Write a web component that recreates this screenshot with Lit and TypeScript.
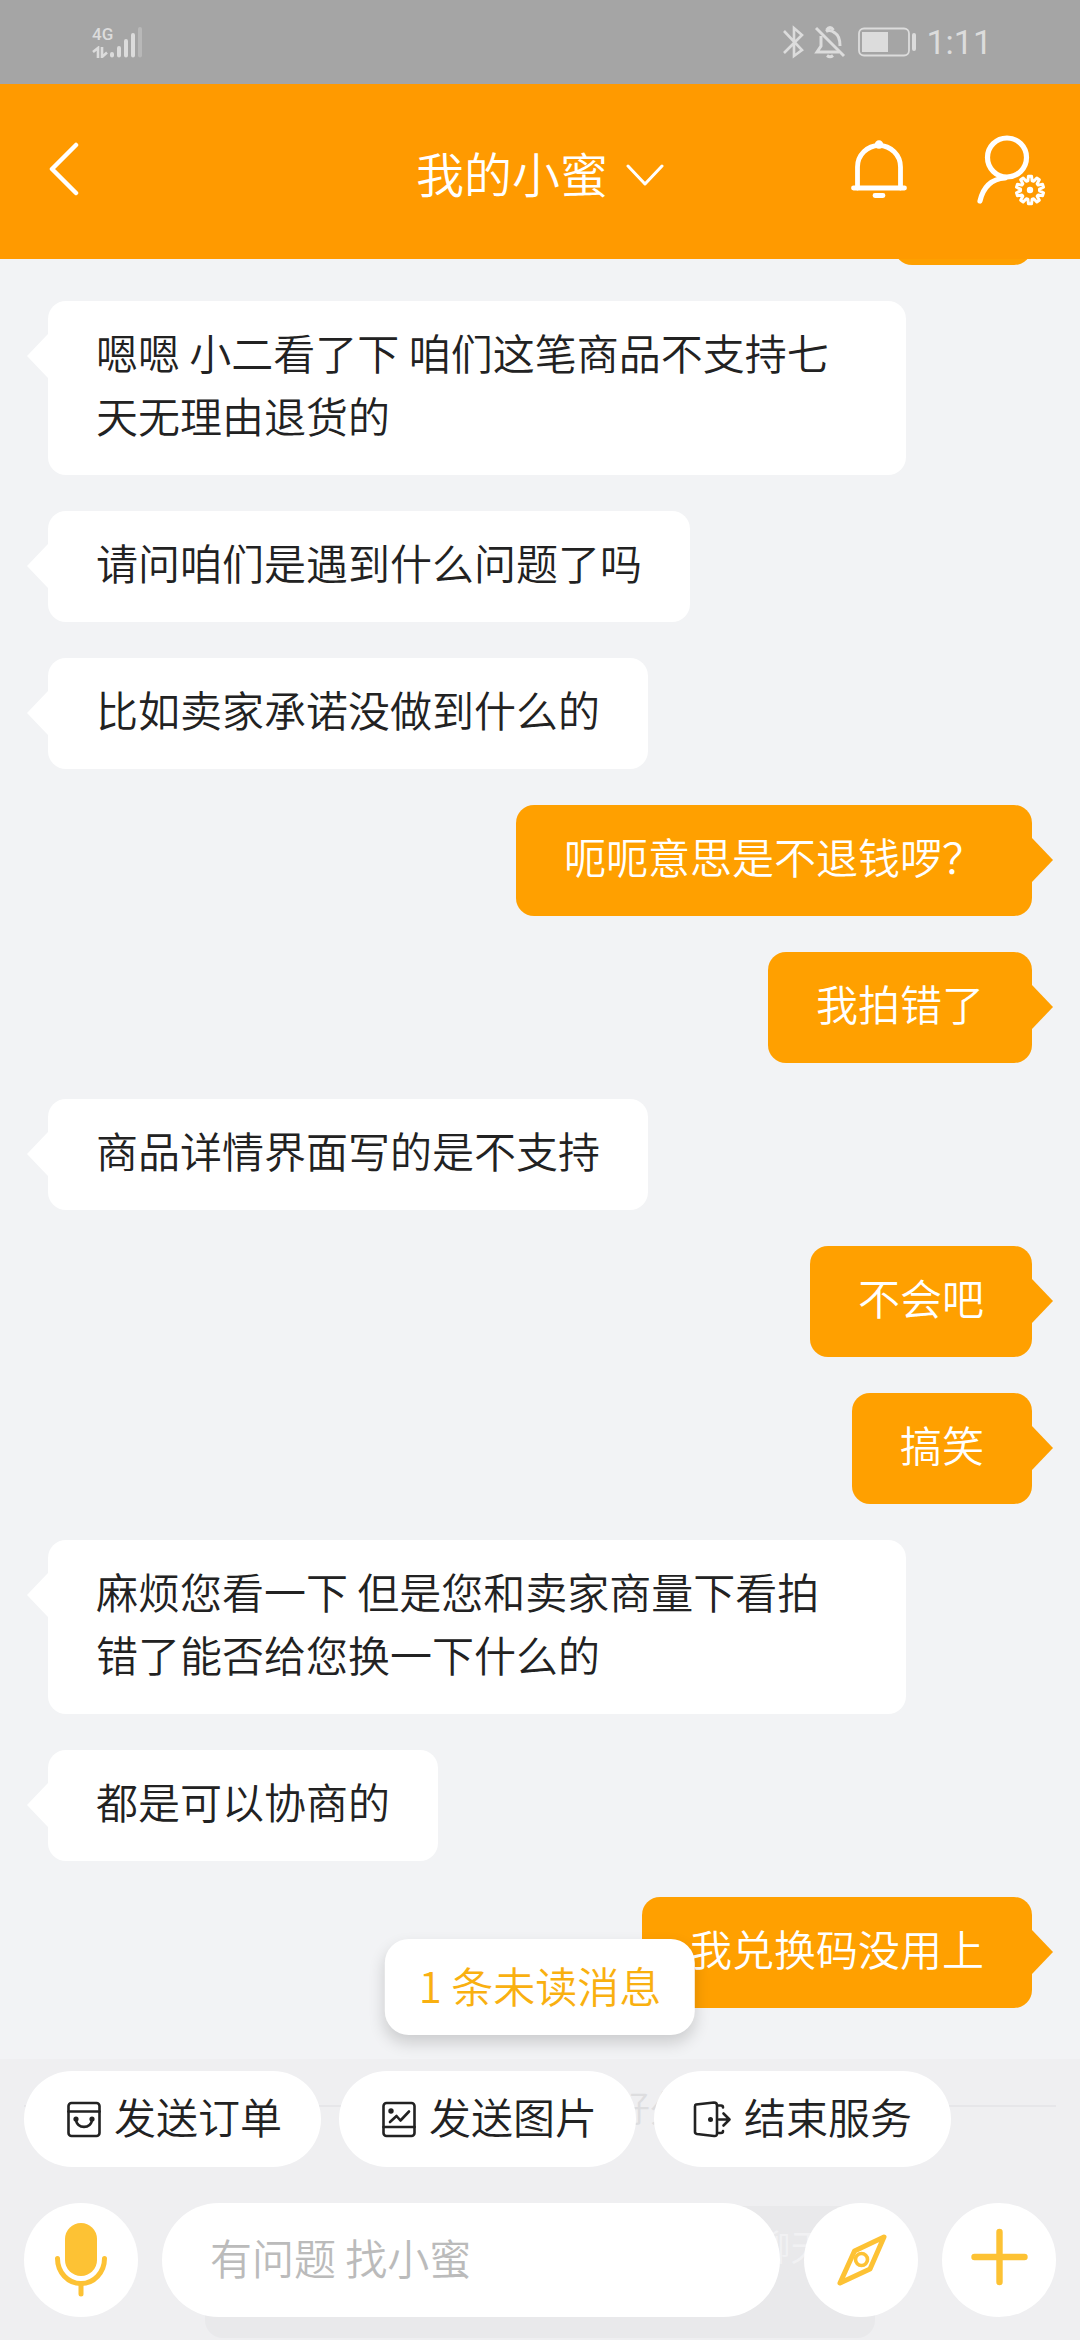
import { LitElement, html, css } from "lit";
import { customElement, property } from "lit/decorators.js";

interface Message {
  mine: boolean;
  text: string;
}

const MESSAGES: Message[] = [
  { mine: false, text: "嗯嗯 小二看了下 咱们这笔商品不支持七天无理由退货的" },
  { mine: false, text: "请问咱们是遇到什么问题了吗" },
  { mine: false, text: "比如卖家承诺没做到什么的" },
  { mine: true, text: "呃呃意思是不退钱啰？" },
  { mine: true, text: "我拍错了" },
  { mine: false, text: "商品详情界面写的是不支持" },
  { mine: true, text: "不会吧" },
  { mine: true, text: "搞笑" },
  { mine: false, text: "麻烦您看一下 但是您和卖家商量下看拍错了能否给您换一下什么的" },
  { mine: false, text: "都是可以协商的" },
  { mine: true, text: "我兑换码没用上" },
];

/* Closed outline of a toothed wheel around the origin. */
function gearPath(teeth: number, inner: number, outer: number): string {
  const step = (Math.PI * 2) / teeth;
  const at = (r: number, a: number) => `${(r * Math.cos(a)).toFixed(2)} ${(r * Math.sin(a)).toFixed(2)}`;
  const parts: string[] = [];
  for (let i = 0; i < teeth; i++) {
    const a = (i + 0.5) * step;
    parts.push(at(inner, a - step * 0.36), at(outer, a - step * 0.18), at(outer, a + step * 0.18), at(inner, a + step * 0.36));
  }
  return `M${parts.join("L")}Z`;
}

@customElement("status-bar")
export class StatusBar extends LitElement {
  static styles = css`
    :host {
      display: flex;
      align-items: center;
      justify-content: space-between;
      flex: none;
      height: 84px;
      padding: 0 88px 0 92px;
      background: #a5a5a5;
      color: #dcdcdc;
      font-family: Roboto, "Noto Sans", sans-serif;
      font-weight: 400;
    }
    svg {
      display: block;
    }
    .side {
      display: flex;
      align-items: center;
      gap: 10px;
    }
    .clock {
      font-size: 34px;
      line-height: 40px;
    }
    .net {
      display: flex;
      align-items: flex-end;
    }
    .net-type {
      display: flex;
      flex-direction: column;
      gap: 3px;
      width: 18px;
      font-size: 17px;
      font-weight: 500;
      line-height: 17px;
    }
  `;
  render() {
    return html`
      <div class="net">
        <div class="net-type">
          <span>4G</span>
          <svg width="18" height="12" viewBox="0 0 18 12" fill="none" stroke="currentColor" stroke-width="2.6">
            <path d="M1 6 L6 2 V12 M10 1 V11 L15 6.500" />
          </svg>
        </div>
        <svg width="33" height="32" viewBox="0 0 33 32" stroke="currentColor" stroke-width="4" stroke-linecap="round">
          <path d="M2 28V29.500M9 22V29.500M16 15V29.500M23 9V29.500" />
          <path d="M30 3V29.500" opacity="0.35" />
        </svg>
      </div>
      <div class="side">
        <svg width="22" height="34" viewBox="0 0 22 34" fill="none" stroke="currentColor" stroke-width="2.6">
          <path d="M2 6 L20 25 L12 31 V3 L20 10 L2 28" />
        </svg>
        <svg width="34" height="34" viewBox="0 0 34 34" fill="none" stroke="currentColor" stroke-width="3">
          <path d="M2 3 L30 31" />
          <path d="M7 11 V21 L3 27 H25" />
          <path d="M12 6.500 Q16 4 21 8 Q26 11 26 21" />
          <path d="M12.500 5 Q16 0 19.500 5" />
          <path d="M13 30.500 Q16 33 19 30.500" />
        </svg>
        <svg width="58" height="30" viewBox="0 0 58 30">
          <rect x="1" y="1.500" width="50" height="27" rx="5" fill="none" stroke="currentColor" stroke-width="1.8" />
          <rect x="4" y="5" width="26" height="20" fill="currentColor" />
          <rect x="54" y="6" width="4" height="18" rx="2" fill="currentColor" />
        </svg>
        <span class="clock">1:11</span>
      </div>
    `;
  }
}

@customElement("chat-bubble")
export class ChatBubble extends LitElement {
  @property({ type: Boolean, reflect: true }) mine = false;

  static styles = css`
    :host {
      display: block;
      position: relative;
      box-sizing: border-box;
      flex: none;
      align-self: flex-start;
      max-width: calc(100% - 126px);
      min-height: 111px;
      padding: 19px 48px 29px;
      border-radius: 18px;
      background: #fff;
      color: #222;
      font-size: 42px;
      line-height: 63px;
    }
    :host([mine]) {
      align-self: flex-end;
      background: #ffa000;
      color: #fff;
    }
    .tail {
      position: absolute;
      top: 33px;
      right: 100%;
      width: 21px;
      height: 44px;
      background: inherit;
      clip-path: polygon(100% 0, 0 50%, 100% 100%);
    }
    :host([mine]) .tail {
      right: auto;
      left: 100%;
      clip-path: polygon(0 0, 100% 50%, 0 100%);
    }
  `;
  render() {
    return html`<span class="tail"></span><slot></slot>`;
  }
}

const ICONS = {
  back: html`<svg width="32" height="56" viewBox="0 0 32 56" stroke-width="4.5">
    <path d="M28 3 L4 27 L28 51" />
  </svg>`,
  down: html`<svg width="38" height="22" viewBox="0 0 38 22" stroke-width="3"><path d="M2 2 L19 20 L36 2" /></svg>`,
  bell: html`<svg width="58" height="60" viewBox="0 0 58 60" stroke-width="4.8">
    <path d="M7.500 48 V27 A21.500 21.500 0 0 1 50.500 27 V48" />
    <path d="M3.500 48 H54.500 M25 55.500 H33" />
    <circle cx="29" cy="4.500" r="1.8" />
  </svg>`,
  account: html`<svg width="70" height="74" viewBox="0 0 70 74" stroke-width="5.2">
    <circle cx="31" cy="24.500" r="19.5" />
    <path d="M29 45 C15 46 7 55 4 68" />
    <g transform="translate(54 57)" stroke-width="3">
      <path d=${gearPath(10, 9.5, 13.8)} />
      <circle r="3.2" fill="currentColor" stroke="none" />
    </g>
  </svg>`,
  order: html`<svg width="42" height="42" viewBox="0 0 42 42" stroke-width="2.6">
    <rect x="5.500" y="5" width="31" height="33" rx="3" />
    <path d="M5.500 13.500 H36.500" />
    <path d="M13 21 C13 31.500 29 31.500 29 21" />
    <g fill="currentColor" stroke="none"><circle cx="13" cy="21" r="2.6" /><circle cx="29" cy="21" r="2.6" /></g>
  </svg>`,
  image: html`<svg width="42" height="42" viewBox="0 0 42 42" stroke-width="2.6">
    <rect x="5.500" y="5" width="31" height="33" rx="3" />
    <path d="M5.500 29 H36.500" />
    <path d="M12 24 L18.500 18 L22.500 22.500 L31 13.500" />
    <circle cx="13" cy="13" r="2.7" fill="currentColor" stroke="none" />
  </svg>`,
  exit: html`<svg width="42" height="42" viewBox="0 0 42 42" stroke-width="2.6">
    <path d="M3 6.500 L21 4.500 Q24 4.500 24 7.500 V35.500 Q24 38.500 21 38 L4 36 Q2 35.500 2 34 V8.500 Q2 6.800 3 6.500 Z" />
    <path d="M25 7.500 H28 Q30 7.500 30 9.500 M25 35 H28 Q30 35 30 33" />
    <path d="M26 21.500 H36 M30.500 15.500 L36.500 21.500 L30.500 27.500" />
    <circle cx="17.500" cy="21.500" r="2.5" fill="currentColor" stroke="none" />
  </svg>`,
  mic: html`<svg width="114" height="114" viewBox="0 0 114 114" stroke-width="5">
    <rect x="41" y="20" width="32" height="53" rx="16" fill="currentColor" stroke="none" />
    <path d="M33.500 55.500 A23.500 25 0 0 0 80.500 55.500" />
    <path d="M57 82 V91" />
  </svg>`,
  compass: html`<svg width="114" height="114" viewBox="0 0 114 114" stroke-width="5">
    <path d="M80 34 L50.500 48 L36 80 L66 66 Z" />
    <circle cx="57.500" cy="56.500" r="6" stroke-width="3.6" />
  </svg>`,
  plus: html`<svg width="114" height="114" viewBox="0 0 114 114" stroke-width="6.4">
    <path d="M57.500 29 V79 M32.500 54 H82.500" />
  </svg>`,
};

const QUICK_ACTIONS = [
  { icon: ICONS.order, label: "发送订单" },
  { icon: ICONS.image, label: "发送图片" },
  { icon: ICONS.exit, label: "结束服务" },
];

@customElement("app-root")
export class AppRoot extends LitElement {
  static styles = css`
    :host {
      display: flex;
      flex-direction: column;
      position: relative;
      height: 100vh;
      overflow: hidden;
      background: #f2f3f5;
      color: #222;
      font-family: "Noto Sans CJK SC", sans-serif;
      font-weight: 350;
    }
    svg {
      display: block;
      flex: none;
      fill: none;
      stroke: currentColor;
      stroke-linecap: round;
      stroke-linejoin: round;
    }
    button {
      display: flex;
      align-items: center;
      justify-content: center;
      margin: 0;
      padding: 0;
      border: 0;
      background: none;
      color: inherit;
      font: inherit;
    }
    .header {
      display: grid;
      grid-template-columns: 1fr auto 1fr;
      align-items: center;
      flex: none;
      height: 175px;
      padding: 0 34px 4px;
      box-sizing: border-box;
      background: #ff9a00;
      color: #fff;
    }
    .back {
      justify-self: start;
      padding: 0 14px;
    }
    .title {
      gap: 18px;
      padding-top: 6px;
      font-size: 48px;
      line-height: 72px;
    }
    .title span {
      padding-bottom: 2px;
    }
    .title svg {
      margin-top: 4px;
    }
    .actions {
      display: flex;
      align-items: center;
      justify-content: flex-end;
      gap: 68px;
    }
    .chat {
      display: flex;
      flex-direction: column;
      gap: 36px;
      flex: 1;
      min-height: 0;
      overflow: hidden;
      padding: 0 48px;
    }
    .scrolled {
      display: flex;
      align-items: flex-end;
      align-self: flex-end;
      flex: none;
      width: 138px;
      height: 6px;
      overflow: hidden;
    }
    .scrolled chat-bubble {
      align-self: flex-end;
      width: 100%;
      max-width: none;
    }
    .divider {
      display: flex;
      align-items: center;
      flex: none;
      height: 124px;
      margin: 0 -24px 2px;
      color: #999;
      font-size: 36px;
    }
    .divider span {
      padding-left: 220px;
    }
    .divider::before,
    .divider::after {
      content: "";
      flex: 1;
      height: 2px;
      background: #c8c8ca;
    }
    .notice {
      align-self: center;
      flex: none;
      box-sizing: border-box;
      width: 68%;
      height: 132px;
      padding: 14px 48px;
      border-radius: 18px;
      background: #d4d5d6;
      color: #fff;
      font-size: 36px;
      line-height: 50px;
      text-align: right;
    }
    .dock {
      position: absolute;
      left: 0;
      right: 0;
      bottom: 0;
      display: flex;
      flex-direction: column;
      gap: 36px;
      padding: 12px 24px 23px;
      background: rgba(237, 238, 240, 0.8);
    }
    .unread {
      position: absolute;
      left: 50%;
      bottom: calc(100% + 24px);
      transform: translateX(-50%);
      height: 96px;
      padding: 0 34px 6px;
      border-radius: 24px;
      background: #fff;
      box-shadow: 0 8px 16px rgba(0, 0, 0, 0.16);
      color: #f9b010;
      font-size: 42px;
      white-space: nowrap;
    }
    .row {
      display: flex;
      align-items: center;
    }
    .quick {
      gap: 18px;
    }
    .pill {
      gap: 9px;
      height: 96px;
      padding: 0 39px;
      border-radius: 48px;
      background: #fff;
      font-size: 42px;
    }
    .pill span {
      padding-bottom: 8px;
    }
    .entry {
      gap: 24px;
    }
    .round {
      flex: none;
      width: 114px;
      height: 114px;
      border-radius: 50%;
      background: #fff;
      color: #fdc234;
    }
    .field {
      flex: 1;
      min-width: 0;
      height: 114px;
      box-sizing: border-box;
      padding: 0 48px 8px;
      border: 0;
      border-radius: 57px;
      outline: none;
      background: #fff;
      color: #222;
      font: inherit;
      font-size: 42px;
    }
    .field::placeholder {
      color: #bbb;
      opacity: 1;
    }
  `;

  render() {
    return html`
      <status-bar></status-bar>
      <header class="header">
        <button class="back" aria-label="返回">${ICONS.back}</button>
        <button class="title"><span>我的小蜜</span>${ICONS.down}</button>
        <div class="actions">
          <button aria-label="通知">${ICONS.bell}</button>
          <button aria-label="账户设置">${ICONS.account}</button>
        </div>
      </header>
      <main class="chat">
        <div class="scrolled"><chat-bubble mine></chat-bubble></div>
        ${MESSAGES.map((m) => html`<chat-bubble ?mine=${m.mine}>${m.text}</chat-bubble>`)}
        <div class="divider"><span>好久</span></div>
        <div class="notice">聊天</div>
      </main>
      <footer class="dock">
        <button class="unread">1 条未读消息</button>
        <div class="row quick">
          ${QUICK_ACTIONS.map((a) => html`<button class="pill">${a.icon}<span>${a.label}</span></button>`)}
        </div>
        <div class="row entry">
          <button class="round" aria-label="语音">${ICONS.mic}</button>
          <input class="field" type="text" aria-label="消息" placeholder="有问题 找小蜜" />
          <button class="round" aria-label="发现">${ICONS.compass}</button>
          <button class="round" aria-label="更多">${ICONS.plus}</button>
        </div>
      </footer>
    `;
  }
}
